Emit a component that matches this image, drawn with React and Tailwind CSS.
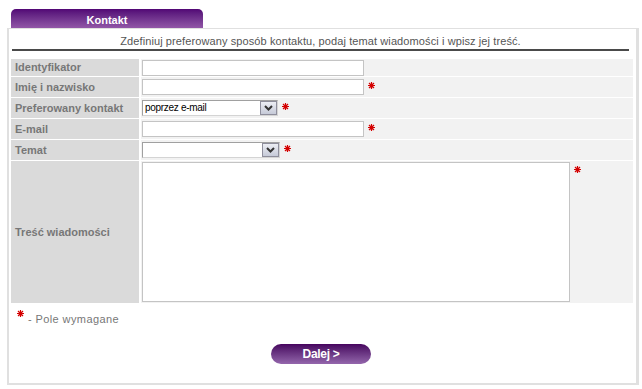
import React from "react";

function Star({ className = "" }) {
  return (
    <svg width="7" height="7" viewBox="0 0 7 7" className={className}>
      <path d="M3.5 0v7M0 3.5h7M1 1l5 5M6 1l-5 5" stroke="#d40000" strokeWidth="1.2" />
    </svg>
  );
}

function Select({ width, value }) {
  return (
    <div
      className={`${width} h-[16px] bg-white border border-t-[#a0a0a0] border-l-[#a0a0a0] border-r-[#d4d4d4] border-b-[#d4d4d4] flex items-center justify-between pl-[2px]`}
    >
      <span className="text-[10px] tracking-[-0.3px] text-black leading-none">{value}</span>
      <div className="w-[17px] h-[14px] border border-[#8e8e9c] bg-gradient-to-b from-[#eceef4] to-[#c6cad8] flex items-center justify-center">
        <svg width="9" height="6" viewBox="0 0 9 6">
          <path d="M1 1l3.5 3.5L8 1" fill="none" stroke="#333" strokeWidth="2" />
        </svg>
      </div>
    </div>
  );
}

const Input = () => (
  <div className="w-[222px] h-[16px] bg-white border border-[#c4c4c4]" />
);

export default function App() {
  const rows = [
    { label: "Identyfikator", h: "h-[17px]", field: <Input />, star: false },
    { label: "Imię i nazwisko", h: "h-[20px]", field: <Input />, star: true },
    {
      label: "Preferowany kontakt",
      h: "h-[20px]",
      field: <Select width="w-[136px]" value="poprzez e-mail" />,
      star: true,
    },
    { label: "E-mail", h: "h-[20px]", field: <Input />, star: true },
    { label: "Temat", h: "h-[20px]", field: <Select width="w-[138px]" value="" />, star: true },
  ];

  return (
    <div className="w-[642px] h-[389px] bg-white font-['Liberation_Sans',Arial,sans-serif] overflow-hidden">
      {/* TAB */}
      <div className="pt-[9px] pl-[11px]">
        <div className="w-[192px] h-[19px] rounded-t-[5px] bg-gradient-to-b from-[#520575] to-[#9256a7] text-white font-bold text-[11px] flex items-center justify-center pt-[3px]">
          Kontakt
        </div>
      </div>

      {/* PANEL */}
      <div className="ml-[7px] w-[632px] h-[357px] bg-white border-t border-l-2 border-r-[3px] border-b-2 border-[#e0e0e0] pl-[2px] pr-[5px]">
        <div className="ml-[1px] mr-[2px] h-[22px] pt-[5px] border-b-2 border-[#4a4a4a] text-center text-[11px] leading-[14px] text-[#555] tracking-[0.1px]">
          Zdefiniuj preferowany sposób kontaktu, podaj temat wiadomości i wpisz jej treść.
        </div>

        {/* FORM TABLE */}
        <div className="mt-[8px] grid grid-cols-[128px_492px] gap-x-[2px] gap-y-px">
          {rows.map((r) => (
            <React.Fragment key={r.label}>
              <div className={`${r.h} bg-[#dadada] flex items-center pl-[4px] text-[11px] font-bold text-[#777]`}>
                {r.label}
              </div>
              <div className={`${r.h} bg-[#f2f2f2] flex items-center pl-px`}>
                {r.field}
                {r.star && <Star className="ml-[4px] self-start mt-[5px]" />}
              </div>
            </React.Fragment>
          ))}
          <div className="h-[142px] bg-[#dadada] flex items-center pl-[4px] text-[11px] font-bold text-[#777]">
            Treść wiadomości
          </div>
          <div className="h-[142px] bg-[#f2f2f2] flex items-start pl-px pt-px">
            <div className="w-[428px] h-[140px] bg-white border border-[#c4c4c4]" />
            <Star className="ml-[4px] mt-[4px]" />
          </div>
        </div>

        {/* REQUIRED NOTE */}
        <div className="mt-[7px] pl-[6px] flex items-start">
          <Star />
          <span className="ml-[4px] mt-[2px] text-[11px] leading-[14px] text-[#777] tracking-[0.4px]">
            - Pole wymagane
          </span>
        </div>

        {/* BUTTON */}
        <div className="mt-[18px] flex justify-center">
          <button className="w-[100px] h-[20px] rounded-full bg-gradient-to-b from-[#47035f] to-[#9466ac] text-white font-bold text-[12px] tracking-[-0.3px] leading-none">
            Dalej &gt;
          </button>
        </div>
      </div>
    </div>
  );
}
